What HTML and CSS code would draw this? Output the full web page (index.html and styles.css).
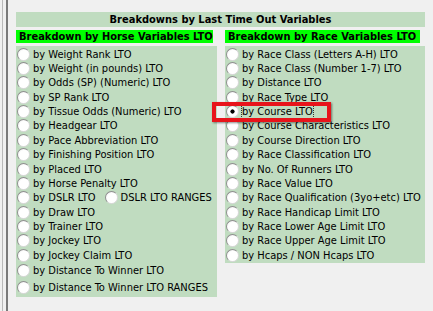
FILE: index.html
```html
<!DOCTYPE html>
<html>
<head>
    <title>Breakdowns by Last Time Out Variables</title>
    <link rel="stylesheet" href="styles.css">
</head>
<body>
    <div class="frame">
        <div class="group">
            <div class="title">Breakdowns by Last Time Out Variables</div>
            <div class="columns">
                <div class="column left">
                    <div class="heading">Breakdown by Horse Variables LTO</div>
                    <div class="panel">
                        <label class="row"><input type="radio" name="lto"> by Weight Rank LTO</label>
                        <label class="row"><input type="radio" name="lto"> by Weight (in pounds) LTO</label>
                        <label class="row"><input type="radio" name="lto"> by Odds (SP) (Numeric) LTO</label>
                        <label class="row"><input type="radio" name="lto"> by SP Rank LTO</label>
                        <label class="row"><input type="radio" name="lto"> by Tissue Odds (Numeric) LTO</label>
                        <label class="row"><input type="radio" name="lto"> by Headgear LTO</label>
                        <label class="row"><input type="radio" name="lto"> by Pace Abbreviation LTO</label>
                        <label class="row"><input type="radio" name="lto"> by Finishing Position LTO</label>
                        <label class="row"><input type="radio" name="lto"> by Placed LTO</label>
                        <label class="row"><input type="radio" name="lto"> by Horse Penalty LTO</label>
                        <div class="row">
                            <label class="pair"><input type="radio" name="lto"> by DSLR LTO</label>
                            <label class="pair second"><input type="radio" name="lto"> DSLR LTO RANGES</label>
                        </div>
                        <label class="row"><input type="radio" name="lto"> by Draw LTO</label>
                        <label class="row"><input type="radio" name="lto"> by Trainer LTO</label>
                        <label class="row"><input type="radio" name="lto"> by Jockey LTO</label>
                        <label class="row"><input type="radio" name="lto"> by Jockey Claim LTO</label>
                        <label class="row tall"><input type="radio" name="lto"> by Distance To Winner LTO</label>
                        <label class="row tall"><input type="radio" name="lto"> by Distance To Winner LTO RANGES</label>
                    </div>
                </div>
                <div class="column right">
                    <div class="heading">Breakdown by Race Variables LTO</div>
                    <div class="panel">
                        <label class="row"><input type="radio" name="lto"> by Race Class (Letters A-H) LTO</label>
                        <label class="row"><input type="radio" name="lto"> by Race Class (Number 1-7) LTO</label>
                        <label class="row"><input type="radio" name="lto"> by Distance LTO</label>
                        <label class="row"><input type="radio" name="lto"> by Race Type LTO</label>
                        <label class="row selected"><input type="radio" name="lto" checked> <span class="focus">by Course LTO</span><span class="highlight"></span></label>
                        <label class="row"><input type="radio" name="lto"> by Course Characteristics LTO</label>
                        <label class="row"><input type="radio" name="lto"> by Course Direction LTO</label>
                        <label class="row"><input type="radio" name="lto"> by Race Classification LTO</label>
                        <label class="row"><input type="radio" name="lto"> by No. Of Runners LTO</label>
                        <label class="row"><input type="radio" name="lto"> by Race Value LTO</label>
                        <label class="row"><input type="radio" name="lto"> by Race Qualification (3yo+etc) LTO</label>
                        <label class="row"><input type="radio" name="lto"> by Race Handicap Limit LTO</label>
                        <label class="row"><input type="radio" name="lto"> by Race Lower Age Limit LTO</label>
                        <label class="row"><input type="radio" name="lto"> by Race Upper Age Limit LTO</label>
                        <label class="row"><input type="radio" name="lto"> by Hcaps / NON Hcaps LTO</label>
                    </div>
                </div>
            </div>
        </div>
    </div>
</body>
</html>
```

FILE: styles.css
```css
body {
    margin: 0;
    background-color: #f0f0f0;
    font-family: "DejaVu Sans Condensed", "DejaVu Sans", sans-serif;
    font-size: 11px;
    color: #000;
}
.frame {
    height: 311px;
    margin-left: 2px;
    border-left: 1px solid #b9b9b9;
    padding-left: 3px;
    box-sizing: border-box;
}
.group {
    height: 100%;
    border-left: 2px solid #7a7a7a;
    padding: 12px 0 0 8px;
    box-sizing: border-box;
}
.title {
    width: 409px;
    height: 15px;
    line-height: 15px;
    background-color: #c0dcc0;
    font-weight: bold;
    text-align: center;
}
.columns {
    display: flex;
    gap: 8px;
    margin-top: 3px;
    align-items: flex-start;
}
.column.left {
    width: 201px;
}
.column.right {
    width: 200px;
}
.heading {
    height: 13px;
    line-height: 13px;
    background-color: #00ff00;
    font-weight: bold;
    padding-left: 3px;
    margin-right: 4px;
    white-space: nowrap;
}
.column.right .heading {
    margin-right: 5px;
}
.panel {
    margin-top: 3px;
    background-color: #c0dcc0;
    padding: 1px 0 1px 1px;
}
.row {
    display: flex;
    align-items: center;
    height: 14.36px;
    white-space: nowrap;
}
.row.tall {
    height: 17px;
}
.pair {
    display: flex;
    align-items: center;
}
.pair.second {
    margin-left: 9px;
}
input[type="radio"] {
    appearance: none;
    width: 13px;
    height: 13px;
    margin: 0 3px 0 0;
    border-radius: 50%;
    border: 1px solid #8f8f8f;
    border-right-color: #d8d8d8;
    border-bottom-color: #d8d8d8;
    background: radial-gradient(circle at 60% 60%, #ffffff 55%, #e6e6e6 100%);
    box-sizing: border-box;
    flex: none;
}
input[type="radio"]:checked {
    background: radial-gradient(circle, #000 1.8px, #ffffff 2.4px, #ffffff 55%, #e6e6e6 100%);
}
.selected {
    position: relative;
}
.focus {
    outline: 1px dotted #333;
    outline-offset: 0;
}
.highlight {
    position: absolute;
    left: -14px;
    top: -2px;
    width: 119px;
    height: 20px;
    border: 4px solid #e8141b;
    box-sizing: border-box;
    box-shadow: 1px 1px 2px rgba(0, 0, 0, 0.45);
    pointer-events: none;
}
```
